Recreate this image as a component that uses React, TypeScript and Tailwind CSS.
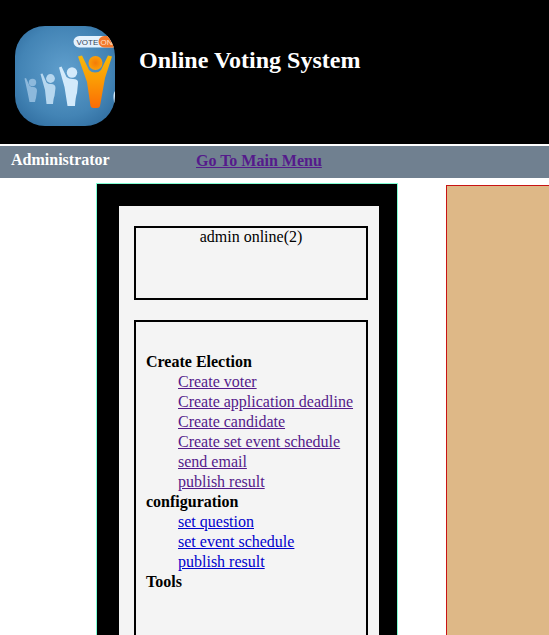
const electionLinks = [
  "Create voter",
  "Create application deadline",
  "Create candidate",
  "Create set event schedule",
  "send email",
  "publish result",
];

const configurationLinks = ["set question", "set event schedule", "publish result"];

function Logo() {
  return (
    <svg viewBox="0 0 100 100" className="size-25 shrink-0" role="img" aria-label="Voting logo">
      <defs>
        <radialGradient id="sky" cx="0.5" cy="0.45" r="0.75">
          <stop offset="0" stopColor="#609fcd" />
          <stop offset="0.6" stopColor="#4384b5" />
          <stop offset="1" stopColor="#286497" />
        </radialGradient>
        <linearGradient id="winner" x1="0" y1="0" x2="0" y2="1">
          <stop offset="0" stopColor="#f8b809" />
          <stop offset="0.45" stopColor="#fb9d05" />
          <stop offset="1" stopColor="#fb6c05" />
        </linearGradient>
        <radialGradient id="face">
          <stop offset="0" stopColor="#f47b08" />
          <stop offset="1" stopColor="#fb9f08" />
        </radialGradient>
        <clipPath id="badge">
          <rect width="100" height="100" rx="30" />
        </clipPath>
      </defs>
      <g clipPath="url(#badge)">
        <rect width="100" height="100" fill="url(#sky)" />
        <g fill="#8db9dc">
          <circle cx="17.5" cy="56.5" r="3.7" />
          <path d="M9.500 52.500L11 52L14.500 59.500Q16 61 18 61Q22 61 22 65L21 72Q20.300 74 20 76H14.500L12.500 66Z" />
        </g>
        <g fill="#b6d7ef">
          <circle cx="35.5" cy="52.5" r="4.4" />
          <path d="M25.500 48L27.500 47.500L31.500 56.500Q33 58 36 58Q40.500 58 40.500 62L39.500 70Q38.500 72 38 78H31.500L30 64Z" />
        </g>
        <g fill="#d3eafb">
          <circle cx="57" cy="46.5" r="5.2" />
          <path d="M44 41.500L46.500 40.500L51.500 51Q53.500 53 58 53Q63.500 53 63 57L62 67Q60.500 71 60 80H52.500L49.500 61Z" />
        </g>
        <path d="M100 65Q97.500 68 99 76L100 78Z" fill="#d3eafb" />
        <path
          d="M63 30.500L67 29.500L74 44Q76.500 46.500 80 46.500Q84 46.500 86 44L93 29.500L97 30.500L90 52L85 80Q84.500 82 82 82H78.500Q76 82 75.500 80L72 56Z"
          fill="url(#winner)"
        />
        <circle cx="80.5" cy="37" r="7" fill="url(#face)" />
        <rect x="58.5" y="10" width="50" height="11.5" rx="5.75" fill="#e4f2fd" />
        <rect x="83.5" y="10" width="25" height="11.5" rx="5.75" fill="#f4792c" />
        <text x="61.5" y="18.5" fontSize="8" fill="#35465a" fontFamily="Liberation Sans, sans-serif">
          VOTE
        </text>
        <text x="85.5" y="18.5" fontSize="8" fill="#ffe0c8" fontFamily="Liberation Sans, sans-serif">
          ON
        </text>
      </g>
    </svg>
  );
}

function LinkGroup({ title, links, visited = false }: { title: string; links: string[]; visited?: boolean }) {
  return (
    <section>
      <h2 className="font-bold">{title}</h2>
      {links.length > 0 && (
        <ul className="pl-8">
          {links.map((label) => (
            <li key={label}>
              <a href="#" className={visited ? "text-[#551a8b] underline" : "text-[#0000cc] underline"}>
                {label}
              </a>
            </li>
          ))}
        </ul>
      )}
    </section>
  );
}

export default function App() {
  return (
    <div className="flex h-screen flex-col overflow-hidden bg-white font-['Liberation_Serif',serif] text-base leading-5 text-black">
      <header className="flex shrink-0 items-start gap-6 bg-black px-[15px] pt-[26px] pb-[18px]">
        <Logo />
        <h1 className="pt-[18px] text-2xl font-bold text-white">Online Voting System</h1>
      </header>

      <nav className="mt-0.5 flex h-8 shrink-0 bg-[#708090] pt-1 pl-[11px] font-bold">
        <span className="w-[185px] text-white">Administrator</span>
        <a href="#" className="pt-px text-[#551a8b] underline">
          Go To Main Menu
        </a>
      </nav>

      <main className="flex min-h-0 grow pt-[5px] pl-24">
        <aside className="w-[302px] shrink-0 border border-b-0 border-[#7fffd4] bg-black pt-[22px] pr-[18px] pl-[22px]">
          <div className="flex h-full flex-col gap-5 bg-[#f4f4f4] pt-5 pr-[11px] pl-[15px]">
            <p className="h-[74px] shrink-0 border-2 border-black text-center leading-[18px]">admin online(2)</p>
            <div className="grow border-2 border-b-0 border-black px-2.5 pt-[30px]">
              <LinkGroup title="Create Election" links={electionLinks} visited />
              <LinkGroup title="configuration" links={configurationLinks} />
              <LinkGroup title="Tools" links={[]} />
            </div>
          </div>
        </aside>
        <section className="mt-0.5 ml-12 grow border border-r-0 border-b-0 border-[#c81414] bg-[#deb887]" aria-label="Content" />
      </main>
    </div>
  );
}
